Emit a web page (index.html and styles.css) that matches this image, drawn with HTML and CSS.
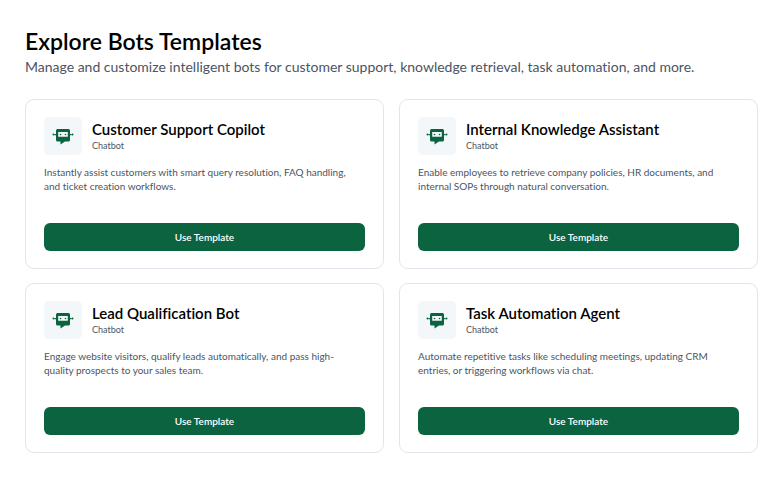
FILE: index.html
```html
<!DOCTYPE html>
<html lang="en">
<head>
  <meta charset="UTF-8">
  <meta name="viewport" content="width=device-width, initial-scale=1.0">
  <link rel="stylesheet" href="styles.css">
  <title>Explore Bots Templates</title>
</head>
<body>
  <svg class="sprite" aria-hidden="true">
    <symbol id="bot" viewBox="0 0 22 22">
      <path fill="currentColor" fill-rule="evenodd" d="M5.500 4h11a1.500 1.500 0 0 1 1.500 1.500v9.500a1.500 1.500 0 0 1-1.500 1.500h-3.500L8.500 19.500V16.500h-3A1.500 1.500 0 0 1 4 15V5.500A1.500 1.500 0 0 1 5.500 4zM6.200 7v4.800h9.600V7z"/>
      <path fill="currentColor" d="M2.500 9H5v1.300H2.500zM17 9h2.500v1.300H17z"/>
      <circle fill="currentColor" cx="1.500" cy="9.600" r="1"/>
      <circle fill="currentColor" cx="20.500" cy="9.600" r="1"/>
      <circle fill="currentColor" cx="8.500" cy="9.500" r=".8"/>
      <circle fill="currentColor" cx="13.500" cy="9.500" r=".8"/>
    </symbol>
  </svg>

  <header class="page-header">
    <h1>Explore Bots Templates</h1>
    <p>Manage and customize intelligent bots for customer support, knowledge retrieval, task automation, and more.</p>
  </header>

  <main class="templates">
    <article class="card">
      <div class="card-head">
        <div class="card-icon"><svg><use href="#bot"/></svg></div>
        <div>
          <h2>Customer Support Copilot</h2>
          <p class="card-type">Chatbot</p>
        </div>
      </div>
      <p class="card-text">Instantly assist customers with smart query resolution, FAQ handling, and ticket creation workflows.</p>
      <button type="button">Use Template</button>
    </article>

    <article class="card">
      <div class="card-head">
        <div class="card-icon"><svg><use href="#bot"/></svg></div>
        <div>
          <h2>Internal Knowledge Assistant</h2>
          <p class="card-type">Chatbot</p>
        </div>
      </div>
      <p class="card-text">Enable employees to retrieve company policies, HR documents, and internal SOPs through natural conversation.</p>
      <button type="button">Use Template</button>
    </article>

    <article class="card">
      <div class="card-head">
        <div class="card-icon"><svg><use href="#bot"/></svg></div>
        <div>
          <h2>Lead Qualification Bot</h2>
          <p class="card-type">Chatbot</p>
        </div>
      </div>
      <p class="card-text">Engage website visitors, qualify leads automatically, and pass high-quality prospects to your sales team.</p>
      <button type="button">Use Template</button>
    </article>

    <article class="card">
      <div class="card-head">
        <div class="card-icon"><svg><use href="#bot"/></svg></div>
        <div>
          <h2>Task Automation Agent</h2>
          <p class="card-type">Chatbot</p>
        </div>
      </div>
      <p class="card-text">Automate repetitive tasks like scheduling meetings, updating CRM entries, or triggering workflows via chat.</p>
      <button type="button">Use Template</button>
    </article>
  </main>
</body>
</html>
```
FILE: styles.css
```css
* {
  box-sizing: border-box;
}
body {
  margin: 0;
  padding: 26px 25px;
  background: #fff;
  color: #000;
  font-family: Lato, "Liberation Sans", sans-serif;
  font-variant-ligatures: none;
}
h1, h2, p {
  margin: 0;
}
.sprite {
  display: none;
}
.page-header {
  margin-bottom: 21px;
}
.page-header h1 {
  font-size: 23px;
  line-height: 30px;
  font-weight: 600;
}
.page-header p {
  font-size: 14px;
  line-height: 22px;
  color: #4b5563;
}
.templates {
  display: grid;
  grid-template-columns: 1fr 1fr;
  gap: 14px 15px;
}
.card {
  display: flex;
  flex-direction: column;
  padding: 17px 18px;
  border: 1px solid #e1e4ea;
  border-radius: 9px;
}
.card-head {
  display: flex;
  align-items: center;
  gap: 10px;
  margin-bottom: 10px;
}
.card-icon {
  display: flex;
  align-items: center;
  justify-content: center;
  width: 38px;
  height: 38px;
  border-radius: 5px;
  background: #f3f7fa;
  color: #0b6340;
}
.card-icon svg {
  width: 22px;
  height: 22px;
}
.card h2 {
  font-size: 15px;
  line-height: 20px;
  font-weight: 600;
}
.card-type {
  font-size: 9px;
  line-height: 14px;
  color: #4b5563;
}
.card-text {
  min-height: 42px;
  margin-bottom: 16px;
  padding-right: 6px;
  font-size: 10px;
  line-height: 14px;
  color: #4b5563;
}
.card button {
  height: 28px;
  margin-top: auto;
  border: 0;
  border-radius: 6px;
  background: #0b6340;
  color: #fff;
  font: 600 10px/14px Lato, "Liberation Sans", sans-serif;
  cursor: pointer;
}
```
